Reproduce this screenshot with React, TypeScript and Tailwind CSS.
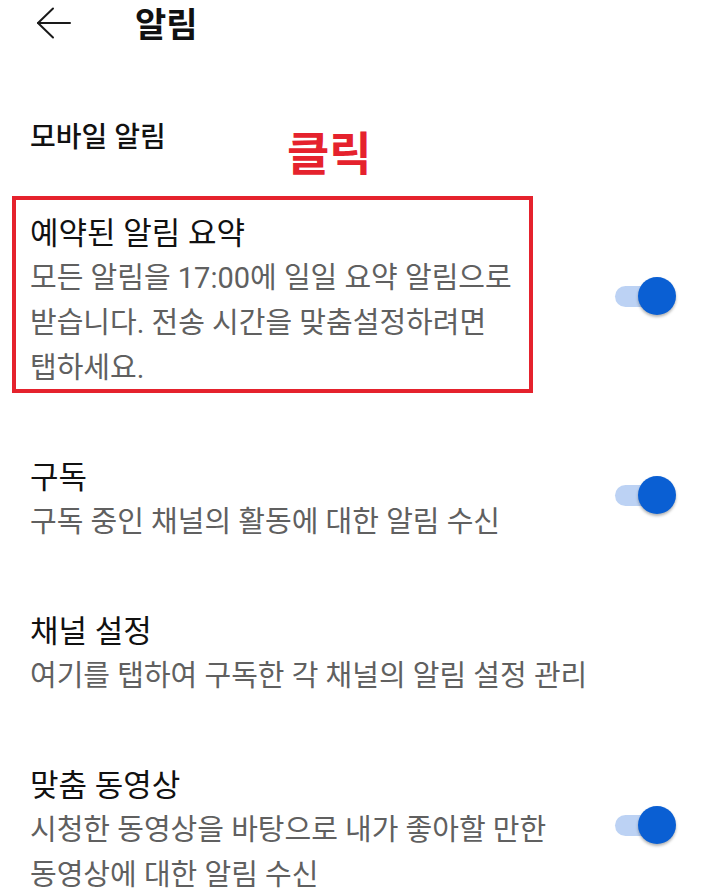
import React from "react";

const FONT = 'font-["Roboto","Noto_Sans_CJK_KR",sans-serif]';

function Toggle() {
  return (
    <div className="relative w-[61px] h-[38px] mb-[11px] shrink-0">
      <div className="absolute left-0 top-[9px] w-[46px] h-[21px] rounded-full bg-[#bcd2f4]" />
      <div className="absolute right-0 top-0 w-[38px] h-[38px] rounded-full bg-[#0a5fd3] shadow-[0_2px_3px_rgba(0,0,0,0.3)]" />
    </div>
  );
}

function Row({
  title,
  lines,
  toggle,
}: {
  title: string;
  lines: string[];
  toggle?: boolean;
}) {
  return (
    <div className="flex items-center justify-between py-[32px] pl-[30px] pr-[44px]">
      <div className="flex flex-col">
        <div className="text-[31px] leading-[45px] text-[#111111]">{title}</div>
        {lines.map((l, i) => (
          <div key={i} className="text-[29px] leading-[45px] text-[#606060] whitespace-nowrap">
            {l}
          </div>
        ))}
      </div>
      {toggle && <Toggle />}
    </div>
  );
}

export default function App() {
  return (
    <div className={`relative w-[720px] h-[889px] bg-white overflow-hidden ${FONT}`}>
      <div className="flex items-center h-[46px] pl-[36px]">
        <svg width="36" height="32" viewBox="0 0 36 32" fill="none" stroke="#1a1a1a" strokeWidth="2" strokeLinecap="round" strokeLinejoin="round">
          <path d="M2 16 L34 16" />
          <path d="M17 1.5 L2 16 L17 30.5" />
        </svg>
        <div className="ml-[63px] mt-[4px] text-[34px] font-bold text-[#111111] leading-none">알림</div>
      </div>

      <div className="mt-[69px] px-[30px] text-[28px] leading-[45px] font-medium text-[#111111]">
        모바일 알림
      </div>

      <div className="mt-[19px] flex flex-col">
        <Row
          title="예약된 알림 요약"
          lines={[
            "모든 알림을 17:00에 일일 요약 알림으로",
            "받습니다. 전송 시간을 맞춤설정하려면",
            "탭하세요.",
          ]}
          toggle
        />
        <Row title="구독" lines={["구독 중인 채널의 활동에 대한 알림 수신"]} toggle />
        <Row title="채널 설정" lines={["여기를 탭하여 구독한 각 채널의 알림 설정 관리"]} />
        <Row
          title="맞춤 동영상"
          lines={["시청한 동영상을 바탕으로 내가 좋아할 만한", "동영상에 대한 알림 수신"]}
          toggle
        />
      </div>

      <div className="absolute left-[12px] top-[196px] w-[521px] h-[197px] border-[4px] border-[#e5222d] pointer-events-none" />
      <div className="absolute left-[287px] top-[131px] text-[46px] leading-none font-bold text-[#e5222d]">
        클릭
      </div>
    </div>
  );
}
